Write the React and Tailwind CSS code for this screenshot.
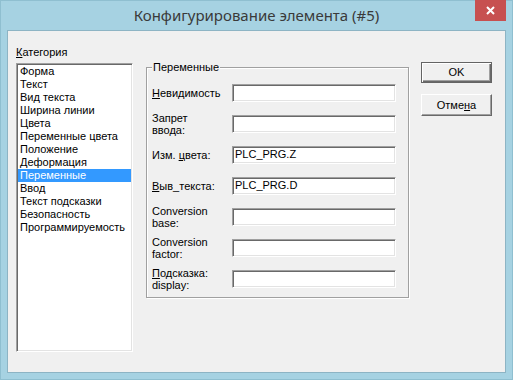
const categories = [
  "Форма",
  "Текст",
  "Вид текста",
  "Ширина линии",
  "Цвета",
  "Переменные цвета",
  "Положение",
  "Деформация",
  "Переменные",
  "Ввод",
  "Текст подсказки",
  "Безопасность",
  "Программируемость",
];

const fields = [
  { label: [<u key="u">Н</u>, "евидимость"], clip: true, value: "" },
  { label: ["Запрет", <br key="b" />, "ввода:"], value: "" },
  { label: ["Изм. ", <u key="u">ц</u>, "вета:"], value: "PLC_PRG.Z" },
  { label: [<u key="u">В</u>, "ыв_текста:"], value: "PLC_PRG.D" },
  { label: ["Conversion", <br key="b" />, "base:"], value: "" },
  { label: ["Conversion", <br key="b" />, "factor:"], value: "" },
  { label: [<u key="u">П</u>, "одсказка:", <br key="b" />, "display:"], value: "" },
];

function Field({ value }) {
  return (
    <div className="h-[18px] w-[164px] border border-t-[#a0a0a0] border-l-[#a0a0a0] border-b-white border-r-white bg-white shadow-[inset_1px_1px_0_#696969,inset_-1px_-1px_0_#e3e3e3] pl-[2px] text-[11px] leading-[15px] text-black">
      {value}
    </div>
  );
}

export default function App() {
  return (
    <div
      className="relative w-[513px] h-[380px] bg-[#a6d2e2] border border-[#8fbfd0] text-black"
      style={{ fontFamily: '"Liberation Sans", Arial, sans-serif' }}
    >
      {/* title bar */}
      <div className="flex h-[29px] items-center justify-center">
        <span
          className="text-[15px] text-[#3a3a3a]"
          style={{ fontFamily: '"Noto Sans", "Open Sans", sans-serif' }}
        >
          Конфигурирование элемента (#5)
        </span>
      </div>
      <div className="absolute right-[6px] top-[-1px] flex h-[21px] w-[31px] items-center justify-center bg-[#c75050]">
        <svg width="9" height="9" viewBox="0 0 9 9">
          <path d="M1 1L8 8M8 1L1 8" stroke="white" strokeWidth="2" />
        </svg>
      </div>

      {/* client area */}
      <div className="ml-[6px] h-[343px] w-[499px] border border-[#8db4c4] bg-[#f0f0f0] text-[11px]">
        <div className="flex items-start pl-[8px]">
          {/* category list */}
          <div className="mt-[14px] flex w-[117px] flex-col">
            <div className="h-[14px] leading-[14px]">
              <u>К</u>атегория
            </div>
            <div className="mt-[4px] h-[289px] border border-t-[#a0a0a0] border-l-[#a0a0a0] border-b-white border-r-white bg-white shadow-[inset_1px_1px_0_#696969,inset_-1px_-1px_0_#e3e3e3] pt-[1px] pl-[1px] pr-[1px]">
              {categories.map((c) => (
                <div
                  key={c}
                  className={`h-[13px] whitespace-nowrap pl-[2px] leading-[13px] ${
                    c === "Переменные" ? "bg-[#3399ff] text-white" : ""
                  }`}
                >
                  {c}
                </div>
              ))}
            </div>
          </div>

          {/* group box */}
          <div className="relative ml-[13px] mt-[36px] h-[231px] w-[263px] border border-[#a0a0a0] shadow-[1px_1px_0_white,inset_1px_1px_0_white] pl-[5px] pt-[16px]">
            <span className="absolute left-[5px] top-[-8px] bg-[#f0f0f0] px-[1px] leading-[14px]">
              Переменные
            </span>
            <div className="flex flex-col">
              {fields.map((f, i) => (
                <div key={i} className="flex h-[31px] items-start">
                  <div className="flex h-[18px] w-[80px] items-center">
                    <div
                      className={`leading-[12px] ${
                        f.clip ? "w-[72px] overflow-hidden whitespace-nowrap" : ""
                      }`}
                    >
                      {f.label}
                    </div>
                  </div>
                  <Field value={f.value} />
                </div>
              ))}
            </div>
          </div>

          {/* buttons */}
          <div className="ml-[12px] mt-[31px] flex w-[71px] flex-col gap-[11px]">
            <div className="flex h-[21px] items-center justify-center border border-[#646464] bg-[#f0f0f0] shadow-[inset_1px_1px_0_white,inset_-1px_-1px_0_#696969,inset_-2px_-2px_0_#a0a0a0]">
              OK
            </div>
            <div className="flex h-[22px] items-center justify-center border border-t-white border-l-white border-b-[#696969] border-r-[#696969] bg-[#f0f0f0] shadow-[inset_-1px_-1px_0_#a0a0a0]">
              Отме<u>н</u>а
            </div>
          </div>
        </div>
      </div>
    </div>
  );
}
